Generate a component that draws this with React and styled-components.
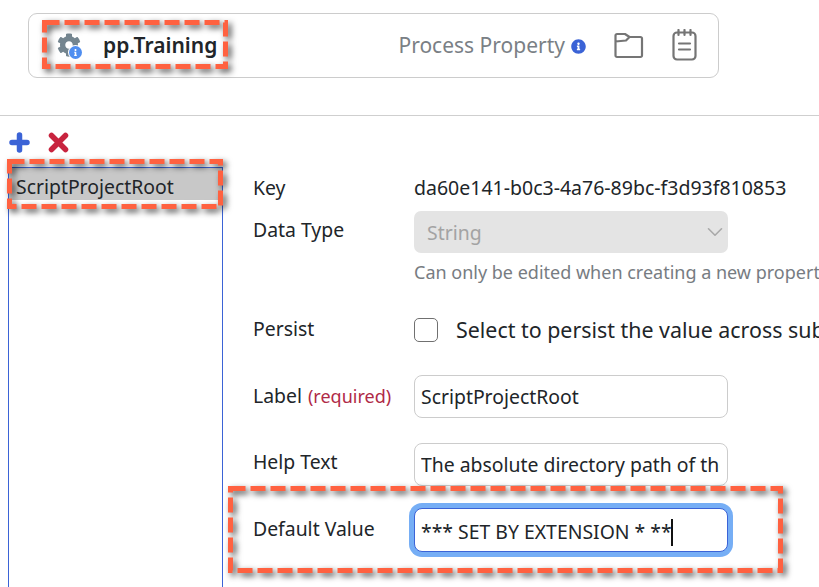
import React from 'react'
import styled, { createGlobalStyle } from 'styled-components'
import { FaCog, FaInfoCircle, FaInfo } from 'react-icons/fa'
import { ChevronDown } from 'lucide-react'

const GlobalStyle = createGlobalStyle`
  html, body {
    margin: 0;
    padding: 0;
    background: #fff;
    overflow: hidden;
  }
  body {
    font-family: "Noto Sans", "Open Sans", sans-serif;
    color: #212529;
  }
`

const Page = styled.div`
  position: relative;
  width: 819px;
  height: 587px;
  overflow: hidden;
`

const Header = styled.header`
  height: 116px;
  box-sizing: border-box;
  padding-top: 13px;
  padding-left: 28px;
  border-bottom: 1px solid #cfcfcf;
`

const HeaderCard = styled.div`
  width: 691px;
  height: 65px;
  box-sizing: border-box;
  border: 1px solid #cccccc;
  border-radius: 9px;
  display: flex;
  align-items: center;
  padding: 0 21px 2px 28px;
`

const BadgeIcon = styled.div`
  position: relative;
  width: 24px;
  height: 24px;
  color: #74858f;
  font-size: 24px;
  display: flex;
`

const InfoDot = styled.span`
  position: absolute;
  right: -1px;
  bottom: -2px;
  width: 13px;
  height: 13px;
  border-radius: 50%;
  background: #4f8ef0;
  color: #fff;
  font-size: 7px;
  display: flex;
  align-items: center;
  justify-content: center;
  box-shadow: 0 0 0 1px #fff;
`

const Title = styled.h1`
  margin: 0 0 0 22px;
  font-size: 21px;
  font-weight: 600;
  line-height: 28px;
  flex: 1;
`

const TypeName = styled.span`
  font-size: 21px;
  color: #7a7f85;
  line-height: 28px;
`

const TypeInfo = styled.span`
  color: #3b63d6;
  font-size: 15px;
  display: flex;
  margin: 3px 28px 0 6px;
`

const ToolIcon = styled.svg`
  width: ${({ $w }) => $w}px;
  height: 32px;
  margin-left: ${({ $gap }) => $gap || 0}px;
  fill: none;
  stroke: #757575;
  stroke-width: 2.2;
  stroke-linecap: round;
  stroke-linejoin: round;
`

const Actions = styled.div`
  height: 51px;
  box-sizing: border-box;
  padding: 16px 0 0 9px;
  display: flex;
  gap: 18px;
`

const ActionIcon = styled.svg`
  width: 21px;
  height: 21px;
  fill: none;
  stroke: ${({ $color }) => $color};
  stroke-width: 5.5;
  stroke-linecap: round;
`

const Body = styled.div`
  display: flex;
  height: 420px;
`

const Sidebar = styled.aside`
  width: 215px;
  margin-left: 8px;
  box-sizing: border-box;
  border: 1px solid #3b63d6;
  border-bottom: 0;
  flex: none;
`

const SideItem = styled.div`
  background: #c8c8c8;
  height: 32px;
  padding-left: 7px;
  font-size: 19.4px;
  line-height: 38px;
  overflow: hidden;
`

const Form = styled.div`
  flex: 1;
  min-width: 0;
  padding: 8px 0 0 30px;
  overflow: hidden;
`

const Row = styled.div`
  display: grid;
  grid-template-columns: 161px 1fr;
  height: ${({ $h }) => $h}px;
  white-space: nowrap;
`

const Label = styled.label`
  font-size: 19.4px;
  line-height: 24px;
  padding-top: ${({ $top }) => $top || 0}px;
`

const Required = styled.span`
  color: #b02a47;
  font-size: 18px;
  margin-left: 1px;
`

const Value = styled.div`
  font-size: 19.5px;
  line-height: 24px;
  padding-top: 1px;
`

const SelectBox = styled.div`
  width: 314px;
  height: 42px;
  box-sizing: border-box;
  background: #e4e4e4;
  border-radius: 7px;
  color: #a3a3a3;
  font-size: 19.4px;
  padding-left: 13px;
  display: flex;
  align-items: center;
  justify-content: space-between;
`

const Hint = styled.div`
  margin-top: 7px;
  font-size: 18px;
  line-height: 24px;
  color: #777c82;
`

const CheckRow = styled.div`
  display: flex;
  align-items: center;
  align-self: start;
  margin-top: 1px;
  gap: 18px;
  font-size: 21.4px;
  line-height: 26px;
`

const CheckBox = styled.span`
  width: 24px;
  height: 24px;
  box-sizing: border-box;
  border: 1px solid #707070;
  border-radius: 5px;
  background: #fff;
  flex: none;
`

const Field = styled.div`
  width: 314px;
  height: ${({ $focused }) => ($focused ? 44 : 43)}px;
  box-sizing: border-box;
  padding: 0 7px 0 6px;
  border: 1px solid ${({ $focused }) => ($focused ? '#3b63d6' : '#cccccc')};
  border-radius: 8px;
  background: #fff;
  font-size: 19.4px;
  line-height: ${({ $focused }) => ($focused ? 45 : 42)}px;
  box-shadow: ${({ $focused }) => ($focused ? '0 0 0 5px #76aef5' : 'none')};
`

const FieldText = styled.div`
  height: 100%;
  overflow: hidden;
`

const Caret = styled.span`
  display: inline-block;
  width: 2px;
  height: 27px;
  background: #111;
  vertical-align: -7px;
  margin-left: -1px;
`

const Callout = styled.svg`
  position: absolute;
  left: ${({ $x }) => $x}px;
  top: ${({ $y }) => $y}px;
  overflow: visible;
  fill: none;
  filter: drop-shadow(3px 3px 3px rgba(0, 0, 0, 0.7));
  pointer-events: none;
`

function Annotation({ x, y, w, h }) {
  return (
    <Callout $x={x} $y={y} width={w} height={h}>
      <rect x="2.5" y="2.5" width={w - 5} height={h - 5} stroke="#ff6140" strokeWidth="5" strokeDasharray="15 5" />
    </Callout>
  )
}

export default function App() {
  return (
    <Page>
      <GlobalStyle />
      <Header>
        <HeaderCard>
          <BadgeIcon>
            <FaCog />
            <InfoDot><FaInfo /></InfoDot>
          </BadgeIcon>
          <Title>pp.Training</Title>
          <TypeName>Process Property</TypeName>
          <TypeInfo><FaInfoCircle /></TypeInfo>
          <ToolIcon $w={30} viewBox="0 0 30 32">
            <path d="M1.500 6.500a1.500 1.500 0 0 1 1.500-1.500h8l4.500 3h11a1.500 1.500 0 0 1 1.500 1.500v17a1.500 1.500 0 0 1-1.500 1.500h-23.500a1.500 1.500 0 0 1-1.500-1.500z M1.500 12.500l10.500-1 3.500-3.500" />
          </ToolIcon>
          <ToolIcon $w={25} $gap={28} viewBox="0 0 25 32">
            <rect x="1.500" y="3.500" width="22" height="27" rx="3.500" />
            <path d="M6.500 1v5 M12.500 1v5 M18.500 1v5 M7 14.500h11 M7 20.500h11" />
          </ToolIcon>
        </HeaderCard>
      </Header>
      <Actions>
        <ActionIcon $color="#3b63d6" viewBox="0 0 21 21">
          <path d="M10.500 3v15 M3 10.500h15" />
        </ActionIcon>
        <ActionIcon $color="#c8243f" viewBox="0 0 21 21">
          <path d="M3.500 3.500l14 14 M17.500 3.500l-14 14" />
        </ActionIcon>
      </Actions>
      <Body>
        <Sidebar>
          <SideItem>ScriptProjectRoot</SideItem>
        </Sidebar>
        <Form>
          <Row $h={36}>
            <Label $top={1}>Key</Label>
            <Value>da60e141-b0c3-4a76-89bc-f3d93f810853</Value>
          </Row>
          <Row $h={105}>
            <Label $top={7}>Data Type</Label>
            <div>
              <SelectBox>
                String
                <ChevronDown size={26} strokeWidth={1.5} color="#a9a9a9" />
              </SelectBox>
              <Hint>Can only be edited when creating a new property.</Hint>
            </div>
          </Row>
          <Row $h={59}>
            <Label $top={1}>Persist</Label>
            <CheckRow>
              <CheckBox />
              Select to persist the value across subsequent runs
            </CheckRow>
          </Row>
          <Row $h={68}>
            <Label $top={9}>Label <Required>(required)</Required></Label>
            <Field><FieldText>ScriptProjectRoot</FieldText></Field>
          </Row>
          <Row $h={65}>
            <Label $top={7}>Help Text</Label>
            <Field><FieldText>The absolute directory path of the script project</FieldText></Field>
          </Row>
          <Row $h={60}>
            <Label $top={9}>Default Value</Label>
            <Field $focused><FieldText>*** SET BY EXTENSION * **<Caret /></FieldText></Field>
          </Row>
        </Form>
      </Body>
      <Annotation x={42} y={20} w={186} h={49} />
      <Annotation x={7} y={159} w={216} h={50} />
      <Annotation x={228} y={486} w={555} h={87} />
    </Page>
  )
}
